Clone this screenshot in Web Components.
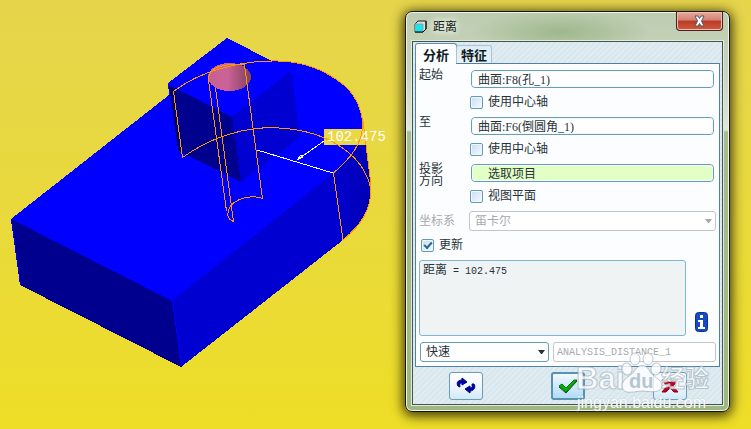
<!DOCTYPE html>
<html lang="zh-CN">
<head>
<meta charset="utf-8">
<title>距离</title>
<style>
html{height:100%}
body{margin:0;min-height:100%;background:linear-gradient(#e6d54b,#e9d93c 50%,#eede27);font:12px/16px "Liberation Serif","Noto Sans CJK SC",serif;color:#263238}
</style>
</head>
<body>
<measure-app></measure-app>
<script>
const define = (name, html) => customElements.define(name, class extends HTMLElement {
  constructor() {
    super();
    this.attachShadow({mode: 'open'});
  }
  connectedCallback() {
    const t = document.createElement('template');
    t.innerHTML = typeof html === 'function' ? html(this) : html;
    this.shadowRoot.replaceChildren(t.content.cloneNode(true));
  }
});

define('cad-scene', `
<style>
:host{display:block;min-width:0}
svg{display:block;width:100%;height:auto;overflow:visible}
text{font:14px "Liberation Mono",monospace}
</style>
<svg viewBox="0 0 405 429" role="img" aria-label="102.475">
  <defs>
    <linearGradient id="hole"><stop offset="0" stop-color="#c85f92"/><stop offset=".45" stop-color="#cc6398"/><stop offset="1" stop-color="#804060"/></linearGradient>
    <linearGradient id="side"><stop offset="0" stop-color="#0000d0"/><stop offset="1" stop-color="#0000b4"/></linearGradient>
  </defs>
  <g shape-rendering="crispEdges">
    <path fill="#00f" d="M11 219L169 95L168 83L227 38L272 61C302 60 326 70 345 86C358 98 363 113 363 130L367 150L333 173L172 301Z"/>
    <path fill="#00008e" d="M11 219L172 301L181 367L20 285Z"/>
    <path fill="#0000d0" d="M172 301L333 173L343 240L181 367Z"/>
    <path fill="url(#side)" d="M333 173C351 158 363 143 363 122L371 185C372 210 361 225 343 240Z"/>
    <path fill="none" stroke="#00f" d="M11.500 220L20.500 285M172.500 301L181.500 366"/>
    <path fill="#00008e" d="M169 85L232 117L241 182L179 151Z"/>
    <path fill="#00006c" d="M169 85L173 88L182 153L178 150Z"/>
    <path fill="#0000d0" d="M232 117L291 71L300 137L241 182Z"/>
    <ellipse cx="229.500" cy="77" rx="21.500" ry="14" fill="url(#hole)"/>
    <path fill="#e9d746" d="M324 129H366V145H324Z"/>
    <g fill="none" stroke="#ff9800">
      <path d="M173.500 91.500C200 71 239 61 272 61C302 60 326 70 345 86C358 98 363 113 363 130"/>
      <path d="M173.500 91.500L182.500 157.500C211 137 245 126 279 128C321 130 364 151 371 190"/>
      <path d="M362.500 117L371 185C372 210 361 225 343 240L333.500 173C351 158 363 143 363 122"/>
      <path d="M208.500 82C207 68 221 63 244.500 65L262.500 198.500C247 193 226 202 228 216Q229 220 233.500 221.500L215.500 88"/>
      <path d="M208.500 80L226.500 211"/>
    </g>
    <g fill="none" stroke="#fff"><path d="M257 150L333 173M324 141L297 160M297 160L301 155L303 157Z"/></g>
  </g>
  <text x="327" y="141" fill="#fff">102.475</text>
</svg>`);

define('form-row', `
<style>
:host{display:grid;grid-template-columns:52px minmax(0,1fr);min-height:18px;line-height:12px}
.body{min-width:0}
</style>
<slot name="label"></slot><div class="body"><slot></slot></div>`);

define('pick-row', el => `
<style>
:host{display:block}
form-row{margin-right:2px}
label{max-width:25px;height:18px;margin-top:-1px}
input{box-sizing:border-box;display:block;width:100%;height:18px;border:1px solid #6a9cb4;border-radius:4px;padding:0 6px;font:inherit;color:#263238;background:#fff;outline:1px solid #f3f8fb;outline-offset:-2px}
:host([active]) input{background:#e2ffc6;padding-left:16px}
tick-box{margin:7px 0 8px -1px}
</style>
<form-row><label slot="label" for="f">${el.getAttribute('label')}</label><input id="f" value="${el.getAttribute('value')}"></form-row>
<form-row><span slot="label"></span><tick-box label="${el.getAttribute('option')}"></tick-box></form-row>`);

define('tick-box', el => `
<style>
:host{display:flex;align-items:center;height:14px}
label{display:flex;align-items:center;gap:5px;line-height:14px;white-space:nowrap}
input{appearance:none;box-sizing:border-box;width:13px;height:13px;margin:0;border:1px solid #659bb7;border-radius:2px;background:linear-gradient(135deg,#c6def4,#f3faff);box-shadow:inset 0 0 0 1px #eff7fd;display:grid;place-items:center}
input:checked::before{content:"";width:6px;height:3px;border:solid #286b93;border-width:0 0 2px 2px;transform:translateY(-1px) rotate(-48deg)}
</style>
<label><input type="checkbox"${el.hasAttribute('checked') ? ' checked' : ''}><span>${el.getAttribute('label')}</span></label>`);

define('combo-box', el => `
<style>
:host{display:block;position:relative;min-width:0;color:#263238}
select{appearance:none;box-sizing:border-box;display:block;width:100%;height:20px;border:1px solid #6a9cb4;border-radius:3px;background:#fff;padding:0 5px;font:inherit;color:inherit;opacity:1}
:host([disabled]){color:#a6aaac}
:host([disabled]) select{border-color:#c1c6c9}
svg{position:absolute;right:4px;top:8px;pointer-events:none}
</style>
<select aria-label="${el.getAttribute('label')}"${el.hasAttribute('disabled') ? ' disabled' : ''}><option>${el.getAttribute('value')}</option></select>
<svg width="7" height="4"><path d="M0 0H7L4 4H3Z" fill="currentColor"/></svg>`);

define('tab-strip', `
<style>
:host{display:flex;align-items:flex-end;height:20px;margin-bottom:-1px;position:relative}
button{box-sizing:border-box;border:1px solid #a7c4d5;border-bottom:0;border-radius:3px 3px 0 0;background:linear-gradient(#dcebf4,#e8f3f9);height:18px;padding:0 4px;margin:0 0 1px -1px;font:bold 13px/17px "Noto Sans CJK SC",sans-serif;color:#0f1c24}
button[aria-selected=true]{height:21px;margin:0;border-color:#5e8fac;background:#fcfdff;padding:0 7px}
</style>
<button role="tab" aria-selected="true">分析</button><button role="tab" aria-selected="false">特征</button>`);

define('tool-button', el => {
  const icons = {
    repeat: '<g stroke="#00007c" stroke-width="1" fill="#0000b4"><path d="M2 9C0 6 2 3 6 3V1L11 5L6 8V6C3 6 4 8 4 10Z"/><path d="M18 7C20 10 18 14 14 14V16L9 12L14 9V11C17 11 16 9 16 7Z"/></g>',
    accept: '<path d="M1 9L4 7L8 11L16 3H19L8 15Z" fill="#00b400" stroke="#00780c" stroke-width="1"/><path d="M1 10L8 16L19 4" fill="none" stroke="#104010"/>',
    cancel: '<path d="M2 3H7L10 6L13 3H18L13 9L18 15H14L10 11L6 15H2L7 9Z" fill="#c00020" stroke="#8a0010"/>'
  };
  return `
<style>
:host{display:block}
button{box-sizing:border-box;display:grid;place-items:center;width:34px;height:28px;padding:0;border:1px solid #6b9bb5;border-radius:3px;background:linear-gradient(#fff,#edf6fc 55%,#d2e9f8)}
:host([primary]) button{border-width:2px;border-color:#5892b0;background:linear-gradient(#f0f9ff,#d3eafa 45%,#b3dcf8)}
</style>
<button aria-label="${el.getAttribute('label')}"><svg width="20" height="18" viewBox="0 0 20 18">${icons[el.getAttribute('icon')]}</svg></button>`;
});

define('site-mark', `
<style>
:host{display:block;pointer-events:none}
svg{display:block;overflow:visible}
text{font-family:"Liberation Sans","Noto Sans CJK SC",sans-serif}
</style>
<svg width="136" height="62" viewBox="0 0 136 62" fill="#fff">
  <g fill-opacity=".8" stroke="#8fa5b3" stroke-opacity=".6" stroke-width="1">
    <text x="0" y="40" font-size="31" font-weight="700">Bai</text>
    <ellipse cx="51" cy="20" rx="5" ry="6" transform="rotate(-15 51 20)"/>
    <ellipse cx="59" cy="10" rx="5" ry="6"/><ellipse cx="72" cy="10" rx="5" ry="6"/>
    <ellipse cx="80" cy="20" rx="5" ry="6" transform="rotate(15 80 20)"/>
    <path d="M46 37C46 29 56 27 59 21C63 15 70 15 73 21C75 27 86 30 86 37C85 44 77 43 66 42C55 43 47 46 46 37Z"/>
    <text x="85" y="38" font-size="24" font-weight="700">经验</text>
  </g>
  <text x="53" y="39" font-size="20" font-weight="700" fill="#b6c6d1">du</text>
  <text x="1" y="59" font-size="16" fill-opacity=".95" stroke="#8fa5b3" stroke-opacity=".3" stroke-width="1" paint-order="stroke">jingyan.baidu.com</text>
</svg>`);

define('glass-window', `
<style>
:host{display:block;box-sizing:border-box;position:relative;border:1px solid #15180f;border-radius:7px;padding:0 6px 6px;background:radial-gradient(ellipse 90px 22px at 48% 20px,#9eb78c,transparent),linear-gradient(#bdcdb0,#c9d3be 60px,#e0e6da 118px,#a6bb91 120px,#a0b680);box-shadow:inset 0 0 0 1px #eef2e9,0 2px 12px 2px rgba(30,25,0,.85)}
header{display:flex;align-items:flex-start;height:29px}
h1{display:flex;align-items:center;gap:6px;flex:1;margin:5px 0 0 2px;font:12px/18px "Noto Sans CJK SC",sans-serif;color:#101810}
h1 span{text-shadow:0 0 6px #fff,0 0 8px #fff}
.close{box-sizing:border-box;width:47px;height:19px;padding:0;border:1px solid #4b201c;border-top:0;border-radius:0 0 4px 4px;background:linear-gradient(#e8a99d,#d48174 45%,#b93b25 50%,#cf5a3e);box-shadow:inset 0 0 0 1px #f0bdb2;display:grid;place-items:center}
.client{box-sizing:border-box;border:1px solid #46554a;outline:1px solid #e2eadb;padding:2px;background:repeating-linear-gradient(135deg,#d8e6ee 0 2px,#e0ebf2 2px 4px)}
site-mark{position:absolute;right:17px;bottom:0}
</style>
<header><h1><svg width="13" height="13"><path d="M1 4L4 1H12V9L9 12H1Z" fill="#d9e0e0" stroke="#172020"/><path d="M1 4H9V12H1Z" fill="#16e5ee" stroke="#8ba0a0"/><path d="M1 12H9L12 9V1" fill="none" stroke="#000"/></svg><span><slot name="title"></slot></span></h1>
<button class="close" aria-label="关闭"><svg width="13" height="12"><path d="M2 1H5L6.500 3.500L8 1H11L8.500 6L11 11H8L6.500 8.500L5 11H2L4.500 6Z" fill="#fff" stroke="#535766"/></svg></button></header>
<div class="client"><slot></slot></div><site-mark></site-mark>`);

define('distance-panel', `
<style>
:host{display:block;font-family:"Liberation Serif","Noto Sans CJK SC",serif}
.page{box-sizing:border-box;border:1px solid #5181a1;background:#fcfdff;padding:6px 3px 4px}
.system combo-box{margin-left:-2px}
.system label{color:#a6aaac;line-height:20px}
.update{margin:7px 0 8px 2px}
.result{display:flex;align-items:flex-end;gap:9px}
output{box-sizing:border-box;flex:1;height:76px;border:1px solid #7eb6d2;border-radius:3px;padding:1px 3px;background:#eff3f4;line-height:16px;white-space:pre}
output span{font:10px "Liberation Mono",monospace}
.info{display:block;margin:0 8px 4px 0}
.name{display:grid;grid-template-columns:129px minmax(0,1fr);gap:4px;padding:6px 0 0 1px}
.name input{box-sizing:border-box;width:100%;height:20px;border:1px solid #c1c6c9;border-radius:3px;background:#fff;color:#a6aaac;font:10px "Liberation Mono",monospace;padding:0 3px}
footer{display:flex;justify-content:space-between;padding:5px 33px 2px 34px}
</style>
<tab-strip role="tablist"></tab-strip>
<div class="page">
  <pick-row label="起始" value="曲面:F8(孔_1)" option="使用中心轴"></pick-row>
  <pick-row label="至" value="曲面:F6(倒圆角_1)" option="使用中心轴"></pick-row>
  <pick-row active label="投影方向" value="选取项目" option="视图平面"></pick-row>
  <form-row class="system"><label slot="label">坐标系</label><combo-box disabled label="坐标系" value="笛卡尔"></combo-box></form-row>
  <tick-box class="update" checked label="更新"></tick-box>
  <div class="result"><output>距离<span> = 102.475</span></output>
    <svg class="info" width="13" height="20" viewBox="0 0 13 20"><rect x=".5" y=".5" width="12" height="19" rx="3" fill="#1749c4" stroke="#0b309c"/><path d="M5 3H8V6H5ZM3 8H8V15H10V17H3V15H5V10H3Z" fill="#fff"/></svg></div>
  <div class="name"><combo-box label="分析类型" value="快速"></combo-box><input aria-label="分析名称" value="ANALYSIS_DISTANCE_1" disabled></div>
</div>
<footer><tool-button icon="repeat" label="重复"></tool-button><tool-button primary icon="accept" label="确定"></tool-button><tool-button icon="cancel" label="取消"></tool-button></footer>`);

define('measure-app', `
<style>
:host{display:grid;grid-template-columns:minmax(0,405fr) minmax(0,325fr);align-items:start;padding-right:21px;overflow:hidden}
glass-window{margin:11px 0 16px;min-width:0}
</style>
<cad-scene></cad-scene>
<glass-window><span slot="title">距离</span><distance-panel></distance-panel></glass-window>`);
</script>
</body>
</html>
